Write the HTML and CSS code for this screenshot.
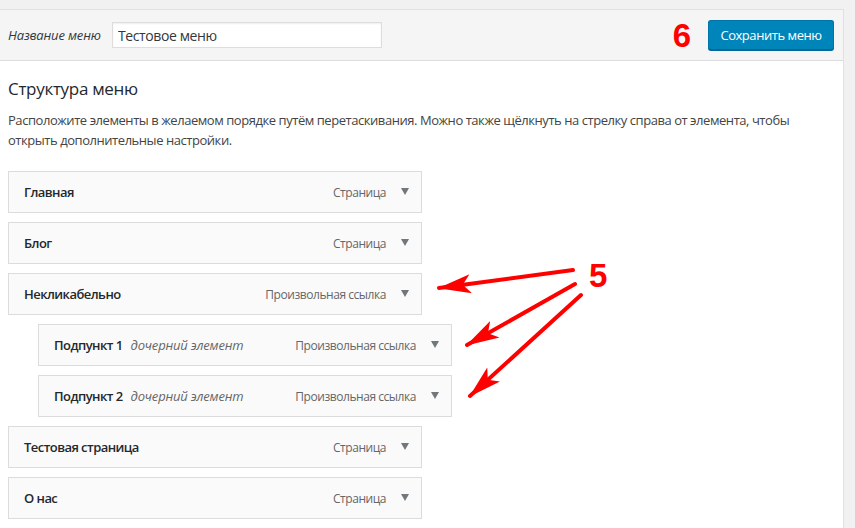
FILE: index.html
```html
<!DOCTYPE html>
<html lang="ru">

<head>
    <meta charset="UTF-8">
    <meta name="viewport" content="width=device-width, initial-scale=1.0">
    <title>Меню</title>

    <link rel="stylesheet" href="styles.css">
</head>

<body>

    <div class="wrap">
        <div class="menu-edit">
            <div class="menu-header">
                <label class="menu-name-label" for="menu-name">Название меню</label>
                <input type="text" id="menu-name" class="menu-name" value="Тестовое меню">
                <span class="step-num">6</span>
                <button class="btn-primary">Сохранить меню</button>
            </div>

            <div class="menu-body">
                <h3>Структура меню</h3>
                <p class="hint">Расположите элементы в желаемом порядке путём перетаскивания. Можно также щёлкнуть на стрелку справа от элемента, чтобы открыть дополнительные настройки.</p>

                <ul class="menu-items">
                    <li class="menu-item">
                        <span class="item-title">Главная</span>
                        <span class="item-type">Страница</span>
                        <span class="item-toggle"></span>
                    </li>
                    <li class="menu-item">
                        <span class="item-title">Блог</span>
                        <span class="item-type">Страница</span>
                        <span class="item-toggle"></span>
                    </li>
                    <li class="menu-item">
                        <span class="item-title">Некликабельно</span>
                        <span class="item-type">Произвольная ссылка</span>
                        <span class="item-toggle"></span>
                    </li>
                    <li class="menu-item sub-item">
                        <span class="item-title">Подпункт 1</span>
                        <span class="item-sub">дочерний элемент</span>
                        <span class="item-type">Произвольная ссылка</span>
                        <span class="item-toggle"></span>
                    </li>
                    <li class="menu-item sub-item">
                        <span class="item-title">Подпункт 2</span>
                        <span class="item-sub">дочерний элемент</span>
                        <span class="item-type">Произвольная ссылка</span>
                        <span class="item-toggle"></span>
                    </li>
                    <li class="menu-item">
                        <span class="item-title">Тестовая страница</span>
                        <span class="item-type">Страница</span>
                        <span class="item-toggle"></span>
                    </li>
                    <li class="menu-item">
                        <span class="item-title">О нас</span>
                        <span class="item-type">Страница</span>
                        <span class="item-toggle"></span>
                    </li>
                </ul>
            </div>
        </div>
    </div>

    <!-- пометки поверх скриншота -->
    <svg class="notes" width="855" height="528" viewBox="0 0 855 528">
        <defs>
            <marker id="head" viewBox="0 0 33 19" refX="32" refY="9.5" markerWidth="33" markerHeight="19"
                markerUnits="userSpaceOnUse" orient="auto">
                <path d="M0 0 L33 9.5 L0 19 L8 9.5 Z" fill="#ff0000" />
            </marker>
        </defs>
        <line x1="573" y1="270" x2="439" y2="288" stroke="#ff0000" stroke-width="4" stroke-linecap="round" marker-end="url(#head)" />
        <line x1="575" y1="284" x2="467" y2="345" stroke="#ff0000" stroke-width="4" stroke-linecap="round" marker-end="url(#head)" />
        <line x1="581" y1="295" x2="470" y2="396" stroke="#ff0000" stroke-width="4" stroke-linecap="round" marker-end="url(#head)" />
        <text x="589" y="287" class="note-num">5</text>
    </svg>

</body>

</html>
```

FILE: styles.css
```css
* {
    margin: 0;
    padding: 0;
    box-sizing: border-box;
}

body {
    background-color: #f1f1f1;
    font-family: "Open Sans", Arial, sans-serif;
    font-size: 13px;
    color: #444;
    position: relative;
    height: 528px;
    overflow: hidden;
}

.wrap {
    padding-top: 9px;
}

.menu-edit {
    width: 844px;
    background-color: #fff;
    border-top: 1px solid #e1e1e1;
    border-right: 1px solid #e1e1e1;
    min-height: 519px;
}

.menu-header {
    display: flex;
    align-items: center;
    height: 51px;
    padding: 0 9px 0 8px;
    background-color: #f5f5f5;
    border-bottom: 1px solid #dddddd;
}

.menu-name-label {
    font-style: italic;
    color: #32373c;
    font-size: 13px;
    letter-spacing: -0.15px;
    width: 104px;
}

.menu-name {
    width: 270px;
    height: 26px;
    border: 1px solid #dddddd;
    box-shadow: inset 0 1px 2px rgba(0, 0, 0, 0.07);
    padding: 0 5px;
    font-family: "Open Sans", Arial, sans-serif;
    font-size: 14px;
    letter-spacing: -0.4px;
    color: #32373c;
    outline: none;
}

.step-num {
    margin-left: auto;
    margin-right: 17px;
    font-family: "Liberation Sans", Arial, sans-serif;
    font-weight: bold;
    font-size: 33px;
    line-height: 1;
    color: #ff0000;
    padding-top: 1px;
}

.btn-primary {
    height: 30px;
    width: 126px;
    background-color: #0085ba;
    border: 1px solid #0073aa;
    border-bottom-color: #006799;
    box-shadow: 0 1px 0 #006799;
    border-radius: 3px;
    color: #fff;
    font-family: "Open Sans", Arial, sans-serif;
    font-size: 13px;
    letter-spacing: -0.45px;
    cursor: pointer;
}

.menu-body {
    padding: 0 10px 0 8px;
}

.menu-body h3 {
    margin-top: 16px;
    font-size: 17px;
    line-height: 24px;
    font-weight: 400;
    letter-spacing: -0.3px;
    color: #23282d;
}

.hint {
    margin-top: 9px;
    line-height: 20px;
    letter-spacing: -0.45px;
    color: #444;
}

.menu-items {
    list-style: none;
    margin-top: 21px;
}

.menu-item {
    display: flex;
    align-items: center;
    width: 414px;
    height: 42px;
    margin-bottom: 9px;
    padding: 0 12px 0 15px;
    background-color: #fafafa;
    border: 1px solid #dcdcdc;
}

.sub-item {
    margin-left: 30px;
}

.item-title {
    font-weight: 600;
    letter-spacing: -0.55px;
    color: #23282d;
}

.item-sub {
    margin-left: 8px;
    font-style: italic;
    letter-spacing: -0.2px;
    color: #666;
}

.item-type {
    margin-left: auto;
    font-size: 12px;
    letter-spacing: -0.45px;
    color: #666;
}

.item-toggle {
    margin-left: 15px;
    width: 0;
    height: 0;
    border-left: 4.5px solid transparent;
    border-right: 4.5px solid transparent;
    border-top: 7px solid #72777c;
    margin-top: -2px;
}

.notes {
    position: absolute;
    top: 0;
    left: 0;
    pointer-events: none;
}

.note-num {
    font-family: "Liberation Sans", Arial, sans-serif;
    font-weight: bold;
    font-size: 33px;
    fill: #ff0000;
}
```
